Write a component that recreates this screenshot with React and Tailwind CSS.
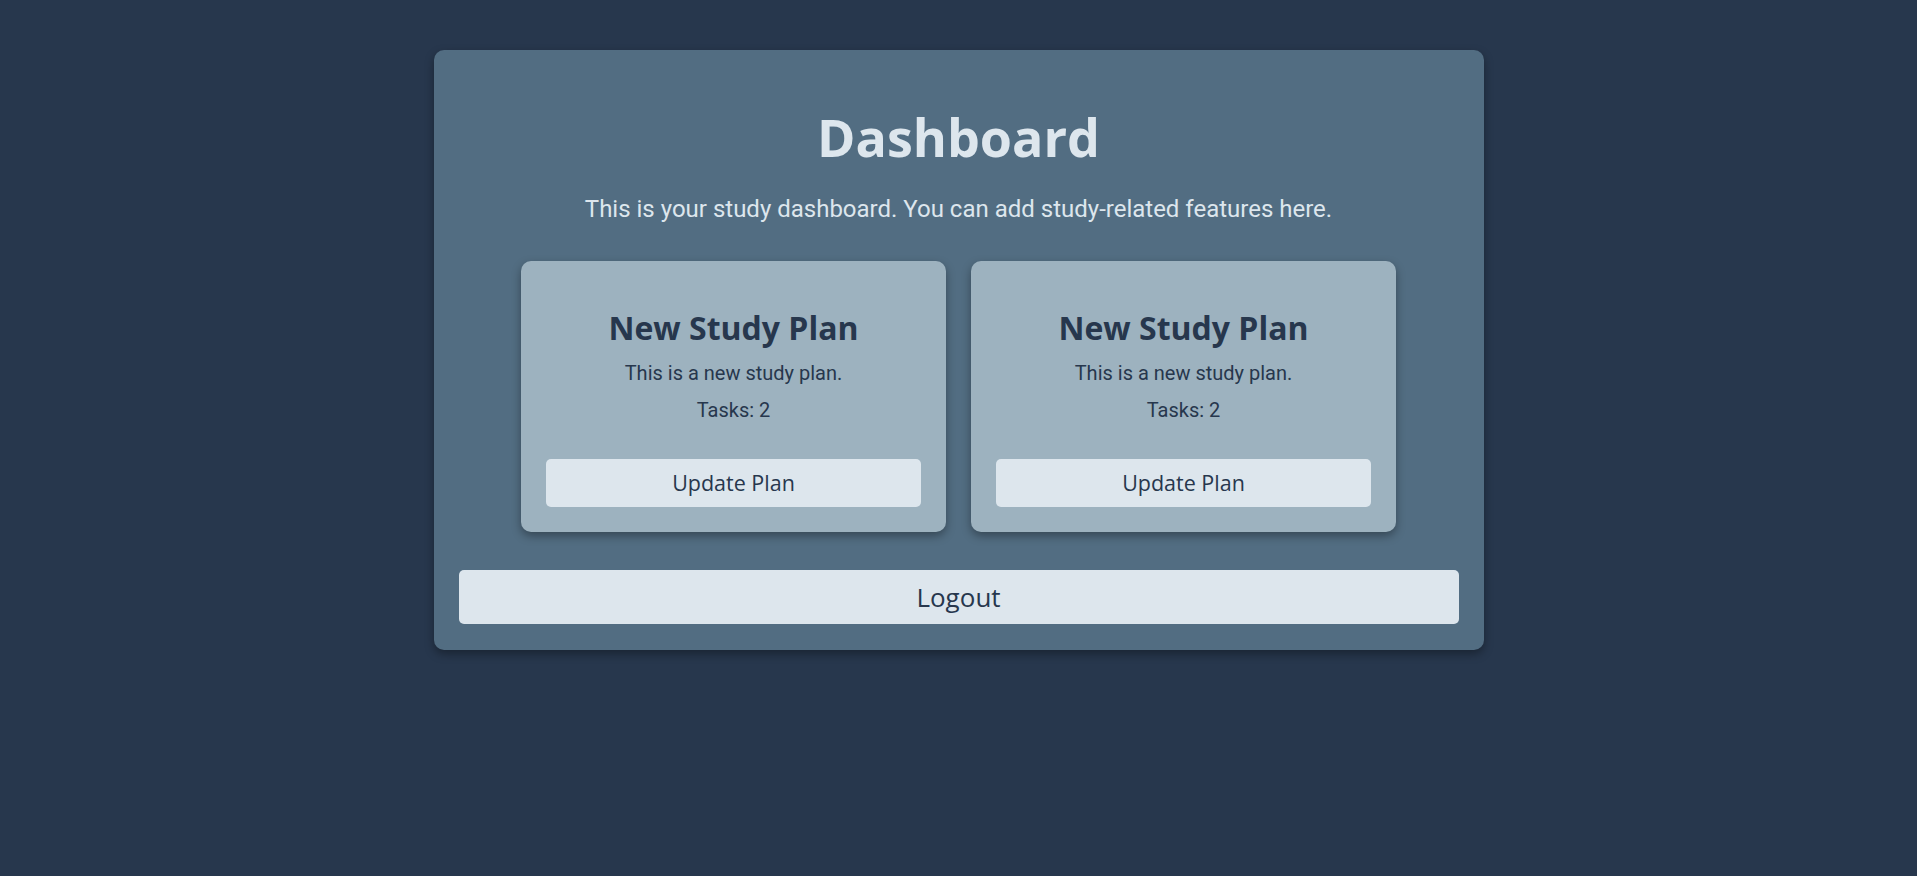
function PlanCard() {
  return (
    <div className="w-[425px] rounded-[10px] bg-[#9DB2BF] p-[25px] text-center text-[#27374D] shadow-[0_4px_10px_rgba(0,0,0,0.35)]">
      <h3 className="mt-[23px] font-['Open_Sans'] text-[32px] font-bold leading-[38px]">New Study Plan</h3>
      <p className="mt-[12px] font-['Roboto'] text-[20px] leading-[28px]">This is a new study plan.</p>
      <p className="mt-[9px] font-['Roboto'] text-[20px] leading-[28px]">Tasks: 2</p>
      <button className="mt-[35px] h-[48px] w-full rounded-[5px] bg-[#DDE6ED] font-['Open_Sans'] text-[21.5px] text-[#27374D]">
        Update Plan
      </button>
    </div>
  );
}

export default function App() {
  return (
    <div className="min-h-[876px] w-full bg-[#27374D] pt-[50px]">
      <div className="mx-auto w-[1050px] rounded-[10px] bg-[#526D82] px-[25px] pt-[25px] pb-[26px] shadow-[0_4px_10px_rgba(0,0,0,0.35)]">
        <h1 className="mt-[31px] text-center font-['Open_Sans'] text-[52px] font-bold leading-[62px] text-[#DDE6ED]">
          Dashboard
        </h1>
        <p className="mt-[25px] text-center font-['Roboto'] text-[24px] leading-[32px] text-[#DDE6ED]">
          This is your study dashboard. You can add study-related features here.
        </p>
        <div className="mt-[36px] flex justify-center gap-[25px]">
          <PlanCard />
          <PlanCard />
        </div>
        <button className="mt-[38px] h-[54px] w-full rounded-[5px] bg-[#DDE6ED] font-['Open_Sans'] text-[26px] text-[#27374D]">
          Logout
        </button>
      </div>
    </div>
  );
}
